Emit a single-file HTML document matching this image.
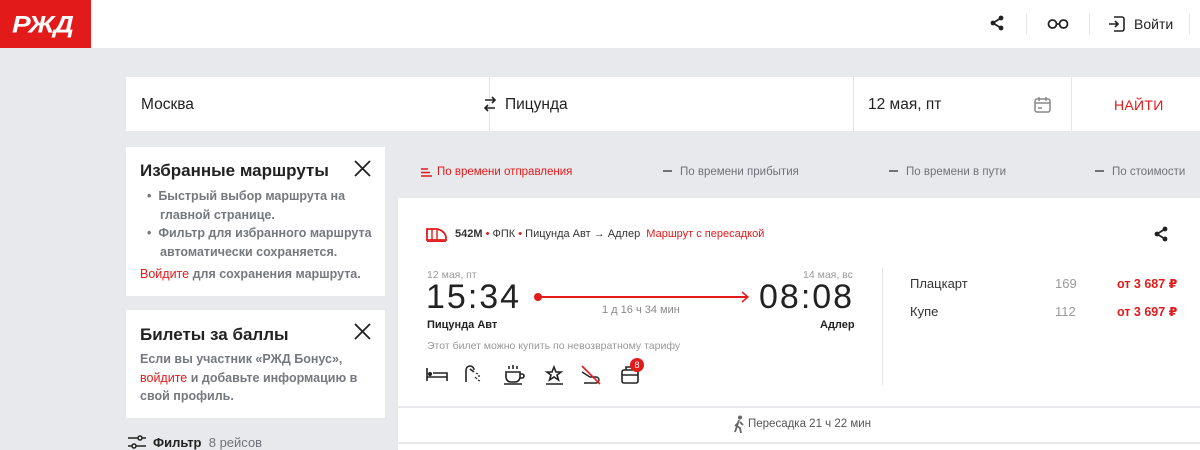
<!DOCTYPE html>
<html><head><meta charset="utf-8"><style>
*{margin:0;padding:0;box-sizing:border-box}
body{width:1200px;height:450px;overflow:hidden;background:#e8e9ec;font-family:"Liberation Sans","DejaVu Sans",sans-serif;color:#222;position:relative}
.a{position:absolute}
.hdr{left:0;top:0;width:1200px;height:48px;background:#fff}
.logo{left:0;top:0;width:91px;height:48px;background:#e21a1a}
.card{background:#fff}
.gray{color:#6f7279}
.red{color:#e21a1a}
</style></head><body>
<div class="a hdr"></div>
<div class="a logo"><div class="a" style="left:12px;top:9px;color:#fff;font-size:28px;font-weight:bold;font-style:italic;letter-spacing:-1px;transform:scaleY(0.85)">РЖД</div></div>
<svg class="a" style="left:990px;top:15px" width="14" height="16" viewBox="0 0 14 16"><g fill="#222"><circle cx="11" cy="3" r="2.4"/><circle cx="3" cy="8" r="2.4"/><circle cx="11" cy="13" r="2.4"/></g><path d="M11 3L3 8L11 13" stroke="#222" stroke-width="1.8" fill="none"/></svg>
<div class="a" style="left:1026px;top:14px;width:1px;height:20px;background:#e5e5e5"></div>
<svg class="a" style="left:1047px;top:18px" width="22" height="12"><circle cx="5.5" cy="6" r="4" stroke="#222" stroke-width="1.8" fill="none"/><circle cx="16.5" cy="6" r="4" stroke="#222" stroke-width="1.8" fill="none"/><path d="M9.5 6h3" stroke="#222" stroke-width="1.6"/></svg>
<div class="a" style="left:1089px;top:14px;width:1px;height:20px;background:#e5e5e5"></div>
<svg class="a" style="left:1108px;top:16px" width="17" height="16" viewBox="0 0 17 16"><path d="M6 1h8a2 2 0 0 1 2 2v10a2 2 0 0 1-2 2H6M1 8h9M7 5l3 3-3 3" stroke="#222" stroke-width="1.6" fill="none"/></svg>
<div class="a" style="left:1134px;top:16px;font-size:14px">Войти</div>
<div class="a" style="left:1189px;top:14px;width:1px;height:20px;background:#e5e5e5"></div>

<div class="a card" style="left:126px;top:77px;width:1074px;height:54px"></div>
<div class="a" style="left:489px;top:77px;width:1px;height:54px;background:#e3e4e7"></div>
<div class="a" style="left:853px;top:77px;width:1px;height:54px;background:#e3e4e7"></div>
<div class="a" style="left:1071px;top:77px;width:1px;height:54px;background:#e3e4e7"></div>
<div class="a" style="left:141px;top:96px;font-size:15.5px">Москва</div>
<svg class="a" style="left:483px;top:95px" width="14" height="18"><path d="M2 5h10M9 2l3 3-3 3M12 13H2M5 10l-3 3 3 3" stroke="#222" stroke-width="1.6" fill="none"/></svg>
<div class="a" style="left:505px;top:96px;font-size:15.5px">Пицунда</div>
<div class="a" style="left:868px;top:96px;font-size:15.5px">12 мая, пт</div>
<svg class="a" style="left:1034px;top:96px" width="17" height="17"><rect x="1" y="3" width="15" height="13" rx="2" stroke="#888" stroke-width="1.5" fill="none"/><path d="M1 7h15M5 1v4M12 1v4M4 12h4" stroke="#888" stroke-width="1.5"/></svg>
<div class="a red" style="left:1114px;top:97px;font-size:14px;letter-spacing:.3px">НАЙТИ</div>

<div class="a card" style="left:126px;top:147px;width:259px;height:149px"></div>
<div class="a" style="left:140px;top:161px;font-size:17px;font-weight:bold">Избранные маршруты</div>
<svg class="a" style="left:354px;top:160px" width="17" height="17"><path d="M1 1l15 15M16 1L1 16" stroke="#222" stroke-width="1.8"/></svg>
<div class="a gray" style="left:147px;top:187px;font-size:12.5px;line-height:18.5px;width:230px;font-weight:bold;color:#75787e">
<div>•&nbsp; Быстрый выбор маршрута на</div><div style="padding-left:13px">главной странице.</div>
<div>•&nbsp; Фильтр для избранного маршрута</div><div style="padding-left:13px">автоматически сохраняется.</div></div>
<div class="a gray" style="left:140px;top:267px;font-size:12.5px;font-weight:bold;color:#75787e"><span class="red" style="font-weight:normal">Войдите</span> для сохранения маршрута.</div>

<div class="a card" style="left:126px;top:310px;width:259px;height:108px"></div>
<div class="a" style="left:140px;top:325px;font-size:17px;font-weight:bold">Билеты за баллы</div>
<svg class="a" style="left:354px;top:323px" width="17" height="17"><path d="M1 1l15 15M16 1L1 16" stroke="#222" stroke-width="1.8"/></svg>
<div class="a gray" style="left:140px;top:350px;font-size:12.5px;line-height:18.5px;width:240px;font-weight:bold;color:#75787e">Если вы участник «РЖД Бонус»,<br><span class="red" style="font-weight:normal">войдите</span> и добавьте информацию в<br>свой профиль.</div>
<svg class="a" style="left:127px;top:434px" width="20" height="16"><path d="M1 4h10M15 4h4M1 12h4M9 12h10" stroke="#222" stroke-width="1.6" fill="none"/><circle cx="13" cy="4" r="2" stroke="#222" stroke-width="1.5" fill="none"/><circle cx="7" cy="12" r="2" stroke="#222" stroke-width="1.5" fill="none"/></svg>
<div class="a" style="left:153px;top:435px;font-size:13px;font-weight:bold">Фильтр <span class="gray" style="font-weight:normal">&nbsp;8 рейсов</span></div>

<svg class="a" style="left:421px;top:167px" width="11" height="11"><path d="M0 2h7M0 5.5h9M0 9h11" stroke="#e21a1a" stroke-width="1.5"/></svg>
<div class="a red" style="left:437px;top:166px;font-size:11.5px">По времени отправления</div>
<div class="a gray" style="left:663px;top:166px;font-size:11.5px"><span style="display:inline-block;width:9px;height:2px;background:#6f7279;vertical-align:3px;margin-right:8px"></span>По времени прибытия</div>
<div class="a gray" style="left:889px;top:166px;font-size:11.5px"><span style="display:inline-block;width:9px;height:2px;background:#6f7279;vertical-align:3px;margin-right:8px"></span>По времени в пути</div>
<div class="a gray" style="left:1095px;top:166px;font-size:11.5px"><span style="display:inline-block;width:9px;height:2px;background:#6f7279;vertical-align:3px;margin-right:8px"></span>По стоимости</div>

<div class="a card" style="left:398px;top:198px;width:802px;height:252px"></div>
<svg class="a" style="left:426px;top:225px" width="21" height="17"><path d="M1 15V4h9c4 0 9 3 10 8v3z" fill="none" stroke="#e21a1a" stroke-width="1.8"/><path d="M6 4v11M11 5v10M1 16.5h19" stroke="#e21a1a" stroke-width="1.4"/></svg>
<div class="a" style="left:455px;top:228px;font-size:11px;color:#333"><b>542М</b> <span class="red">•</span> ФПК <span class="red">•</span> Пицунда Авт → Адлер &nbsp;<span class="red">Маршрут с пересадкой</span></div>
<svg class="a" style="left:1154px;top:226px" width="14" height="16"><g fill="#222"><circle cx="11" cy="3" r="2.4"/><circle cx="3" cy="8" r="2.4"/><circle cx="11" cy="13" r="2.4"/></g><path d="M11 3L3 8L11 13" stroke="#222" stroke-width="1.8" fill="none"/></svg>
<div class="a" style="left:427px;top:269px;font-size:10.5px;color:#999">12 мая, пт</div>
<div class="a" style="left:803px;top:269px;font-size:10.5px;color:#999">14 мая, вс</div>
<div class="a" style="left:426px;top:278px;font-size:34px;letter-spacing:2px;color:#222">15:34</div>
<div class="a" style="left:759px;top:278px;font-size:34px;letter-spacing:2px;color:#222">08:08</div>
<div class="a" style="left:534px;top:293px;width:8px;height:8px;border-radius:50%;background:#e21a1a"></div>
<div class="a" style="left:540px;top:296px;width:207px;height:1.5px;background:#e21a1a"></div>
<svg class="a" style="left:740px;top:291px" width="10" height="12"><path d="M2 1l6 5-6 5" stroke="#e21a1a" stroke-width="1.5" fill="none"/></svg>
<div class="a" style="left:602px;top:304px;font-size:11px;color:#888">1 д 16 ч 34 мин</div>
<div class="a" style="left:427px;top:319px;font-size:11px;font-weight:bold">Пицунда Авт</div>
<div class="a" style="left:820px;top:319px;font-size:11px;font-weight:bold">Адлер</div>
<div class="a" style="left:427px;top:340px;font-size:10.5px;color:#999">Этот билет можно купить по невозвратному тарифу</div>
<svg class="a" style="left:426px;top:362px" width="230" height="24" fill="none" stroke="#222" stroke-width="1.6">
<path d="M1 6v13M1 15h20v4M7 11h14v4"/><circle cx="4" cy="12" r="1.3" fill="#222"/>
<path d="M40 20V8a4 4 0 0 1 8 0M44 7l4 3" /><path d="M50 11l2 1M52 14l2 0M49 15l2 2M52 18l2 1" stroke-width="1.2"/>
<path d="M80 10h14v5a5 5 0 0 1-5 5h-4a5 5 0 0 1-5-5zM94 12h2a2 2 0 0 1 0 4h-2M78 22h18M83 4v3M87 3v4M91 4v3"/>
<path d="M126 10l2-5 2 5 5 0-4 3 1.5 5-4.5-3-4.5 3 1.5-5-4-3zM120 22h17"/>
<path d="M156 10l8 5h6a3 3 0 0 1 0 6h-12" stroke-width="1.4"/><path d="M156 4l18 18" stroke="#e21a1a" stroke-width="1.6"/>
<rect x="196" y="8" width="16" height="13" rx="2"/><path d="M200 8V5h8v3M196 13h16"/>
</svg>
<div class="a" style="left:630px;top:358px;width:14px;height:14px;border-radius:50%;background:#e21a1a;color:#fff;font-size:9px;text-align:center;line-height:14px">8</div>
<div class="a" style="left:882px;top:268px;width:1px;height:117px;background:#e5e5e5"></div>
<div class="a" style="left:910px;top:276px;font-size:13px;color:#333">Плацкарт</div>
<div class="a" style="left:910px;top:304px;font-size:13px;color:#333">Купе</div>
<div class="a" style="left:1055px;top:276px;font-size:13px;color:#999">169</div>
<div class="a" style="left:1055px;top:304px;font-size:13px;color:#999">112</div>
<div class="a red" style="left:1117px;top:276px;font-size:12.5px;font-weight:bold">от 3 687 ₽</div>
<div class="a red" style="left:1117px;top:304px;font-size:12.5px;font-weight:bold">от 3 697 ₽</div>
<div class="a" style="left:398px;top:406px;width:802px;height:1.5px;background:#e8e9ec"></div>
<svg class="a" style="left:733px;top:415px" width="12" height="18"><circle cx="7" cy="2.5" r="2" fill="#666"/><path d="M6 5l-2 6 3 2 1 5M5 8l-3 3M7 7l3 3M4 11l-2 6" stroke="#666" stroke-width="1.8" fill="none"/></svg>
<div class="a" style="left:748px;top:418px;font-size:11.5px;color:#555">Пересадка 21 ч 22 мин</div>
<div class="a" style="left:398px;top:442px;width:802px;height:1.5px;background:#e8e9ec"></div>
</body></html>
